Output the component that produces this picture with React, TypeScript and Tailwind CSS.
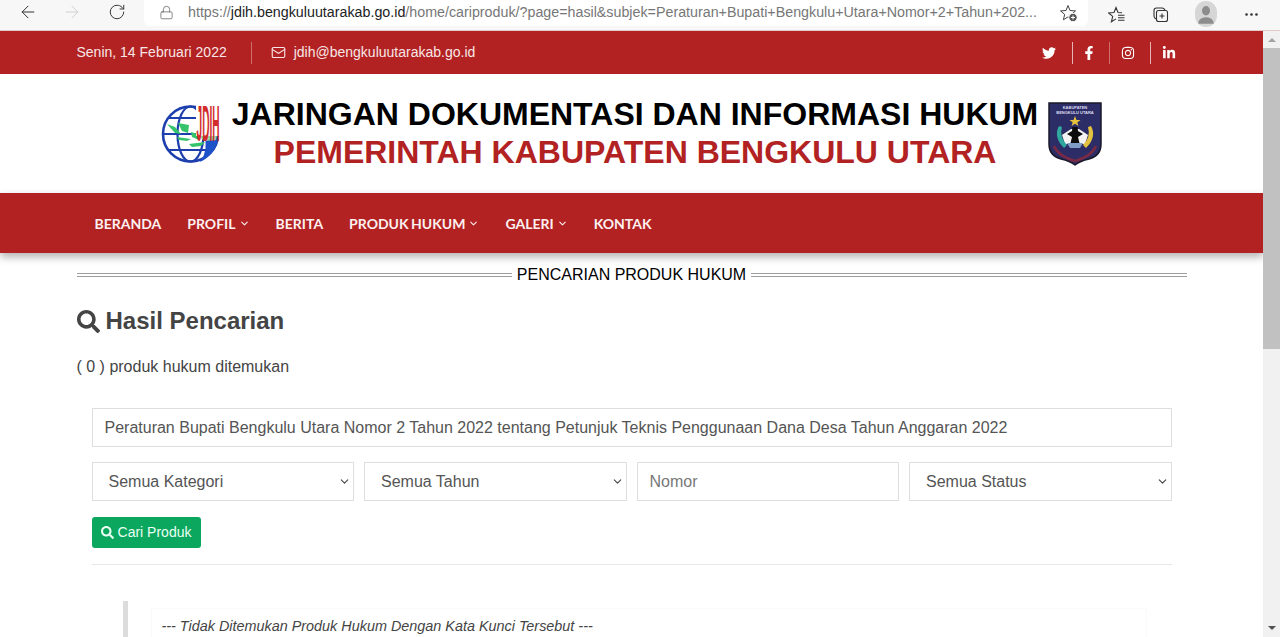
import { ArrowLeft, ArrowRight, ChevronDown, Lock, Mail, RotateCw, MoreHorizontal } from "lucide-react";
import { FaFacebookF, FaInstagram, FaLinkedinIn, FaSearch, FaTwitter } from "react-icons/fa";

const navItems = [
  { label: "BERANDA", caret: false },
  { label: "PROFIL", caret: true },
  { label: "BERITA", caret: false },
  { label: "PRODUK HUKUM", caret: true },
  { label: "GALERI", caret: true },
  { label: "KONTAK", caret: false },
];

function BrowserBar() {
  return (
    <div className="flex h-[31px] shrink-0 items-start border-b border-[#e3c9c9] bg-[#f7f7f7]">
      <div className="flex w-[144px] shrink-0 items-center pl-[18px] pt-[2px] text-[#333]">
        <ArrowLeft size={20} strokeWidth={1.2} />
        <ArrowRight size={20} strokeWidth={1} className="ml-[24px] text-[#c9c9c9]" />
        <RotateCw size={18} strokeWidth={1.3} className="ml-[26px]" />
      </div>
      <div className="flex h-[26px] w-[944px] shrink-0 items-center rounded-b-[6px] bg-white pl-[15px] pr-[10px] text-[14.27px] text-[#777]">
        <Lock size={15} strokeWidth={1.1} className="mb-[2px] shrink-0 text-[#555]" />
        <span className="ml-[14px] truncate">
          https://<span className="text-[#222]">jdih.bengkuluutarakab.go.id</span>
          /home/cariproduk/?page=hasil&subjek=Peraturan+Bupati+Bengkulu+Utara+Nomor+2+Tahun+202...
        </span>
        <svg viewBox="0 0 18 18" className="ml-auto h-[18px] w-[18px] shrink-0" fill="none" stroke="#444" strokeWidth="1">
          <path d="M8 1.5 L10 6.5 L15.5 6.9 L11.3 10.4 L12.6 15.8 L8 12.9 L3.4 15.8 L4.7 10.4 L0.5 6.9 L6 6.5 Z" />
          <circle cx="13" cy="13.5" r="4.2" fill="#555" stroke="#fff" />
          <path d="M13 11.5 V15.5 M11 13.5 H15" stroke="#fff" />
        </svg>
      </div>
      <div className="flex flex-1 items-center pl-[20px] pt-[2px] text-[#333]">
        <svg viewBox="0 0 18 18" className="h-[18px] w-[18px]" fill="none" stroke="currentColor" strokeWidth="1.1">
          <path d="M14 6.7 L10 6.5 L8 1.5 L6 6.5 L0.5 6.9 L4.7 10.4 L3.4 15.8 L8 12.9 M10 9.2 H16.5 M10 11.7 H16.5 M10 14.2 H16.5" />
        </svg>
        <svg viewBox="0 0 18 18" className="ml-[26px] h-[18px] w-[18px]" fill="none" stroke="currentColor" strokeWidth="1.1">
          <rect x="4.5" y="4.5" width="11" height="11" rx="2" />
          <path d="M4 13 Q2 12 2 10 V4.5 Q2 2 4.5 2 H10 Q12 2 13 4 M10 7.5 V12.5 M7.5 10 H12.5" />
        </svg>
        <svg viewBox="0 0 24 24" preserveAspectRatio="none" className="ml-[25px] mt-[-1px] h-[26px] w-[22px] rounded-full bg-[#d6d6d6]">
          <circle cx="12" cy="9" r="4.4" fill="#8d8d8d" />
          <path d="M3.5 21 Q4 15 12 15 Q20 15 20.5 21 Z" fill="#8d8d8d" />
        </svg>
        <MoreHorizontal size={17} strokeWidth={1.8} className="ml-[26px]" />
      </div>
    </div>
  );
}

function Scrollbar() {
  return (
    <div className="flex w-[17px] shrink-0 flex-col items-center bg-[#f1f1f1]">
      <div className="mt-[7px] h-0 w-0 border-x-[4px] border-b-[4px] border-x-transparent border-b-[#a3a3a3]" />
      <div className="mt-[6px] h-[301px] w-full bg-[#c1c1c1]" />
      <div className="mt-auto mb-[7px] h-0 w-0 border-x-[4px] border-t-[4px] border-x-transparent border-t-[#505050]" />
    </div>
  );
}

function JdihLogo() {
  return (
    <svg viewBox="0 0 60 60" className="h-[60px] w-[60px] shrink-0 overflow-visible">
      <circle cx="29.5" cy="30" r="27.5" fill="#fff" stroke="#1d3fae" strokeWidth="2.6" />
      <ellipse cx="29.5" cy="30" rx="13" ry="27.5" fill="none" stroke="#1d3fae" strokeWidth="2.2" />
      <path d="M2 30 H57 M7 14 H52 M7 46 H52" fill="none" stroke="#1d3fae" strokeWidth="2.2" />
      <path d="M6 20 L14 23 L20 30 L14 29 Z M17 19 L28 21 L27 29 L21 27 Z M16 33 L30 35 L26 37 L18 36 Z M30 28 L40 31 L38 36 L31 33 Z M28 40 L44 38 L40 42 L31 43 Z" fill="#35c46c" />
      <path d="M43 31 H57.5 Q56 50 39 58 Q48 46 43 31 Z" fill="#1d52c8" />
      <path d="M38 32 L56 30 L55 36 L43 37 Z" fill="#8fd9a8" />
      <rect x="35" y="0" width="25" height="32" fill="#fff" />
      <text
        transform="translate(35.5 37) scale(0.46 2.3)"
        fontFamily="Liberation Sans, sans-serif"
        fontSize="22"
        fontWeight="700"
        fill="#d22b2b"
      >
        JDIH
      </text>
    </svg>
  );
}

function KabupatenLogo() {
  return (
    <svg viewBox="0 0 54 64" className="h-[64px] w-[54px] shrink-0">
      <path d="M1 1 H53 V42 Q53 54 41 57 Q32 59 27 63 Q22 59 13 57 Q1 54 1 42 Z" fill="#2c2c66" stroke="#1a1a2a" strokeWidth="1.5" />
      <text x="27" y="7" textAnchor="middle" fontFamily="Liberation Sans, sans-serif" fontSize="4" fontWeight="700" fill="#dcdcf0">KABUPATEN</text>
      <text x="27" y="12" textAnchor="middle" fontFamily="Liberation Sans, sans-serif" fontSize="4" fontWeight="700" fill="#dcdcf0">BENGKULU UTARA</text>
      <path d="M27 14 L28.5 18 H32.5 L29.3 20.4 L30.5 24 L27 21.8 L23.5 24 L24.7 20.4 L21.5 18 H25.5 Z" fill="#e6c23c" />
      <path d="M14 33 L23 27 H31 L40 33 L37 42 H17 Z" fill="#f4f4f4" />
      <path d="M24.5 25 H29.5 L30 29 L35 32 L30 35 L31.5 41 H22.5 L24 35 L19 32 L24 29 Z" fill="#0c0c0c" />
      <path d="M11 24 Q5 35 16 46 L19 43 Q11 35 14 25 Z" fill="#2fa9a0" />
      <path d="M43 24 Q49 35 38 46 L35 43 Q43 35 40 25 Z" fill="#e3c240" />
      <path d="M19 41 H35 L32 46 H22 Z" fill="#7f9cc4" />
      <path d="M6 44 Q10 54 27 59 Q44 54 48 44" fill="none" stroke="#7a2a45" strokeWidth="2.6" />
    </svg>
  );
}

function TopBar() {
  return (
    <div className="flex h-[43px] shrink-0 items-center bg-[#b22222] text-[#f8e6e6]">
      <div className="mx-auto flex w-[1140px] items-center px-[15px] text-[14px]">
        <span>Senin, 14 Februari 2022</span>
        <span className="ml-[24px] h-[22px] w-px bg-[#cf6f6f]" />
        <Mail size={15} strokeWidth={1.8} className="ml-[19px]" />
        <span className="ml-[8px]">jdih@bengkuluutarakab.go.id</span>
        <div className="ml-auto flex items-center pr-[11px] text-[14px] text-white">
          <FaTwitter />
          <span className="ml-[16px] mr-[9px] h-[22px] w-px bg-[#e5b5b5]" />
          <FaFacebookF />
          <span className="ml-[13px] mr-[11px] h-[22px] w-px bg-[#cf6f6f]" />
          <FaInstagram />
          <span className="ml-[15px] mr-[11px] h-[22px] w-px bg-[#e5b5b5]" />
          <FaLinkedinIn />
        </div>
      </div>
    </div>
  );
}

function SiteHeader() {
  return (
    <div className="flex h-[119px] shrink-0 items-center justify-center bg-white">
      <JdihLogo />
      <div className="ml-[11px] mr-[10px] flex w-[806px] flex-col items-center whitespace-nowrap pb-[1px] font-['Liberation_Sans',sans-serif] text-[32px] font-bold leading-[38px]">
        <div className="text-black">JARINGAN DOKUMENTASI DAN INFORMASI HUKUM</div>
        <div className="text-[#b22222]">PEMERINTAH KABUPATEN BENGKULU UTARA</div>
      </div>
      <KabupatenLogo />
    </div>
  );
}

function MainNav() {
  return (
    <nav className="relative z-10 flex h-[60px] shrink-0 items-center bg-[#b22222] shadow-[0_4px_8px_rgba(0,0,0,0.3)]">
      <div className="mx-auto flex w-[1140px] items-center gap-[26px] px-[33px] font-['Lato',sans-serif] text-[14px] font-bold text-[#fdf0f0] [word-spacing:-1px]">
        {navItems.map((item) => (
          <span key={item.label} className="flex items-center gap-[3px]">
            {item.label}
            {item.caret ? <ChevronDown size={11} strokeWidth={2.4} /> : null}
          </span>
        ))}
      </div>
    </nav>
  );
}

const fieldClass =
  "h-[39px] w-full border border-[#dedede] bg-white text-[16px] text-[#555] outline-none placeholder:text-[#777]";

function SearchForm() {
  return (
    <div className="mt-[29px] px-[15px]">
      <input
        readOnly
        value="Peraturan Bupati Bengkulu Utara Nomor 2 Tahun 2022 tentang Petunjuk Teknis Penggunaan Dana Desa Tahun Anggaran 2022"
        className={`${fieldClass} px-[12px]`}
      />
      <div className="mt-[15px] grid grid-cols-4 gap-[10px]">
        {["Semua Kategori", "Semua Tahun"].map((label) => (
          <div key={label} className={`${fieldClass} flex items-center justify-between pl-[16px] pr-[2px]`}>
            {label}
            <ChevronDown size={13} strokeWidth={2} className="text-[#444]" />
          </div>
        ))}
        <input placeholder="Nomor" className={`${fieldClass} px-[12px]`} />
        <div className={`${fieldClass} flex items-center justify-between pl-[16px] pr-[2px]`}>
          Semua Status
          <ChevronDown size={13} strokeWidth={2} className="text-[#444]" />
        </div>
      </div>
      <button className="mt-[16px] flex h-[31px] w-[109px] items-center justify-center gap-[4px] rounded-[3px] bg-[#0ba75f] text-[14px] text-[#eafff3]">
        <FaSearch size={13} />
        Cari Produk
      </button>
      <div className="mt-[16px] border-t border-[#e8e8e8]" />
    </div>
  );
}

export default function App() {
  return (
    <div className="flex h-[637px] flex-col overflow-hidden bg-white font-['Liberation_Sans',sans-serif]">
      <BrowserBar />
      <div className="flex min-h-0 flex-1">
        <div className="min-w-0 flex-1 overflow-hidden">
          <TopBar />
          <SiteHeader />
          <MainNav />
          <main className="mx-auto w-[1140px] px-[15px]">
            <div className="mt-[10px] flex items-center gap-[5px] text-[16px] text-black">
              <span className="h-[4px] flex-1 border-y border-[#9d9d9d]" />
              PENCARIAN PRODUK HUKUM
              <span className="h-[4px] flex-1 border-y border-[#9d9d9d]" />
            </div>
            <h2 className="mt-[19px] flex items-center gap-[6px] text-[24px] font-bold leading-[30px] text-[#444]">
              <FaSearch size={23} />
              Hasil Pencarian
            </h2>
            <p className="mt-[19px] text-[16px] leading-[24px] text-[#444]">( 0 ) produk hukum ditemukan</p>
            <SearchForm />
            <blockquote className="ml-[46px] mt-[36px] h-[60px] border-l-[5px] border-[#dcdcdc] pl-[23px] pt-[7px]">
              <div className="mr-[40px] border border-[#fafafa] px-[10px] pt-[7px] text-[14.4px] italic text-[#444]">
                --- Tidak Ditemukan Produk Hukum Dengan Kata Kunci Tersebut ---
              </div>
            </blockquote>
          </main>
        </div>
        <Scrollbar />
      </div>
    </div>
  );
}
